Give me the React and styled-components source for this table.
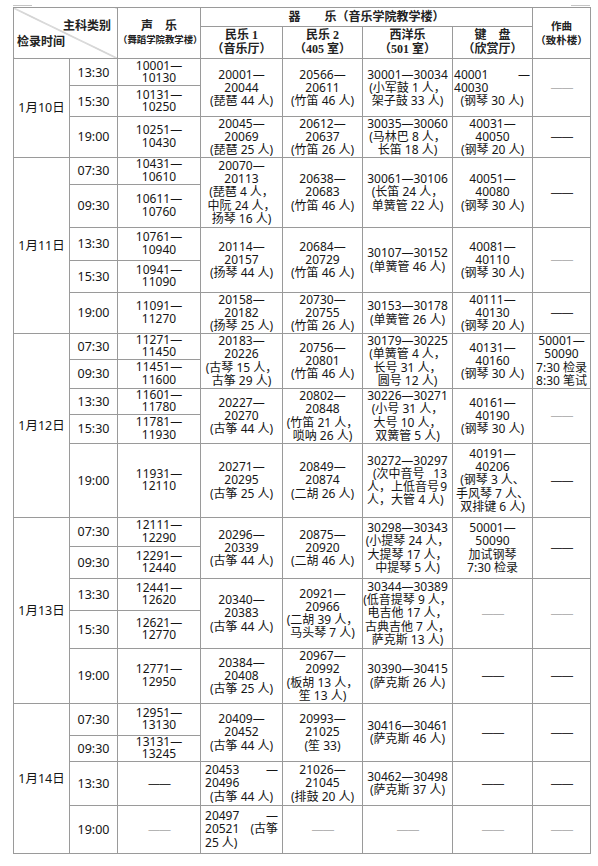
import React from 'react';
import styled, { createGlobalStyle } from 'styled-components';

const Global = createGlobalStyle`
  html, body { margin: 0; padding: 0; background: #fff; }
  body {
    font-family: "Noto Sans", "Noto Sans CJK SC", sans-serif;
    color: #151515;
  }
`;

const Page = styled.div`
  padding: 5px 0 0 13px;
`;

const Marks = styled.div`
  display: flex;
  justify-content: space-between;
  width: 577px;
  height: 1px;
  margin-bottom: 1px;
`;

const Mark = styled.span`
  display: block;
  width: 19px;
  height: 1px;
  background: #c4c4c4;
`;

const Table = styled.table`
  border-collapse: collapse;
  table-layout: fixed;
  width: 577px;
`;

const Row = styled.tr`
  height: ${(p) => p.$h}px;
`;

const border = '1px solid #9a9a9a';

const HeadCell = styled.th`
  border: ${border};
  padding: 0;
  font-family: "Liberation Serif", "Noto Sans CJK SC", serif;
  font-weight: 700;
  font-size: 12px;
  line-height: 13px;
  color: #222;
  text-align: center;
  vertical-align: middle;
  white-space: nowrap;
`;

const HeadLine = styled.span`
  display: block;
  height: 13px;
  font-size: ${(p) => p.$size || 12}px;
  & + & {
    margin-top: 1px;
  }
`;

const DiagCell = styled.th`
  border: ${border};
  padding: 0;
  font-family: "Liberation Serif", "Noto Sans CJK SC", serif;
  font-weight: 700;
  font-size: 12px;
  line-height: 16px;
  color: #222;
  background: linear-gradient(
    to top right,
    transparent calc(50% - 0.7px),
    #9a9a9a 50%,
    transparent calc(50% + 0.7px)
  );
`;

const DiagInner = styled.div`
  display: flex;
  flex-direction: column;
  padding: 1px 6px 0 3px;
`;

const DiagTop = styled.span`
  height: 16px;
  text-align: right;
`;

const DiagBottom = styled.span`
  height: 16px;
  text-align: left;
`;

const Cell = styled.td`
  border: ${border};
  padding: 0;
  font-size: 12px;
  line-height: 13px;
  text-align: center;
  vertical-align: middle;
  white-space: nowrap;
  overflow: visible;
`;

const DateCell = styled(Cell)`
  font-size: 12.5px;
`;

const TimeCell = styled(Cell)`
  font-size: 12.5px;
`;

const Line = styled.span`
  display: block;
  height: ${(p) => (p.$tight ? 12.4 : 13.2)}px;
  line-height: ${(p) => (p.$tight ? 12.4 : 13)}px;
`;

const Dash = styled.span`
  display: block;
  height: 13px;
  color: ${(p) => (p.$light ? '#b4b4b4' : '#333')};
  letter-spacing: -1px;
`;

const Justified = styled.div`
  padding: ${(p) => p.$pad};
  text-align: left;
`;

const Spread = styled.span`
  display: flex;
  height: 13.2px;
  justify-content: space-between;
  padding-left: ${(p) => p.$indent || 0};
`;

const LeftLine = styled.span`
  display: block;
  height: 13.2px;
  text-align: left;
`;

const CenterLine = styled.span`
  display: block;
  height: 13.2px;
  text-align: center;
`;

const L = (...lines) => ({ kind: 'lines', lines });
const D = (light) => ({ kind: 'dash', light });
const J = (parts, pad) => ({ kind: 'just', parts, pad });
const sp = (a, b, indent) => ({ type: 'spread', a, b, indent });
const lf = (text) => ({ type: 'left', text });
const ct = (text) => ({ type: 'center', text });

const dates = [
  {
    date: '1月10日',
    rows: [
      {
        t: '13:30', h: 27, v: L('10001—', '10130'), span: 2,
        g: [
          L('20001—', '20044', '(琵琶 44 人)'),
          L('20566—', '20611', '(竹笛 46 人)'),
          L('30001—30034', '(小军鼓 1 人，', '架子鼓 33 人)'),
          J([sp('40001', '—'), lf('40030'), ct('(钢琴 30 人)')], '0 2px 0 1px'),
          D(true),
        ],
      },
      { t: '15:30', h: 31, v: L('10131—', '10250') },
      {
        t: '19:00', h: 39, v: L('10251—', '10430'), span: 1,
        g: [
          L('20045—', '20069', '(琵琶 25 人)'),
          L('20612—', '20637', '(竹笛 26 人)'),
          L('30035—30060', '(马林巴 8 人，', '长笛 18 人)'),
          L('40031—', '40050', '(钢琴 20 人)'),
          D(false),
        ],
      },
    ],
  },
  {
    date: '1月11日',
    rows: [
      {
        t: '07:30', h: 27, v: L('10431—', '10610'), span: 2,
        g: [
          L('20070—', '20113', '(琵琶 4 人，', '中阮 24 人，', '扬琴 16 人)'),
          L('20638—', '20683', '(竹笛 46 人)'),
          L('30061—30106', '(长笛 24 人，', '单簧管 22 人)'),
          L('40051—', '40080', '(钢琴 30 人)'),
          D(false),
        ],
      },
      { t: '09:30', h: 43, v: L('10611—', '10760') },
      {
        t: '13:30', h: 33, v: L('10761—', '10940'), span: 2,
        g: [
          L('20114—', '20157', '(扬琴 44 人)'),
          L('20684—', '20729', '(竹笛 46 人)'),
          L('30107—30152', '(单簧管 46 人)'),
          L('40081—', '40110', '(钢琴 30 人)'),
          D(true),
        ],
      },
      { t: '15:30', h: 32, v: L('10941—', '11090') },
      {
        t: '19:00', h: 41, v: L('11091—', '11270'), span: 1,
        g: [
          L('20158—', '20182', '(扬琴 25 人)'),
          L('20730—', '20755', '(竹笛 26 人)'),
          L('30153—30178', '(单簧管 26 人)'),
          L('40111—', '40130', '(钢琴 20 人)'),
          D(false),
        ],
      },
    ],
  },
  {
    date: '1月12日',
    rows: [
      {
        t: '07:30', h: 26, v: L('11271—', '11450'), span: 2,
        g: [
          L('20183—', '20226', '(古琴 15 人，', '古筝 29 人)'),
          L('20756—', '20801', '(竹笛 46 人)'),
          L('30179—30225', '(单簧管 4 人，', '长号 31 人，', '圆号 12 人)'),
          L('40131—', '40160', '(钢琴 30 人)'),
          L('50001—', '50090', '7:30 检录', '8:30 笔试'),
        ],
      },
      { t: '09:30', h: 29, v: L('11451—', '11600') },
      {
        t: '13:30', h: 26, v: L('11601—', '11780'), span: 2,
        g: [
          L('20227—', '20270', '(古筝 44 人)'),
          L('20802—', '20848', '(竹笛 21 人，', '唢呐 26 人)'),
          L('30226—30271', '(小号 31 人，', '大号 10 人，', '双簧管 5 人)'),
          L('40161—', '40190', '(钢琴 30 人)'),
          D(true),
        ],
      },
      { t: '15:30', h: 29, v: L('11781—', '11930') },
      {
        t: '19:00', h: 74, v: L('11931—', '12110'), span: 1,
        g: [
          L('20271—', '20295', '(古筝 25 人)'),
          L('20849—', '20874', '(二胡 26 人)'),
          J(
            [
              lf('30272—30297'),
              sp('(次中音号', '13', '6px'),
              sp('人，上低音号', '9'),
              lf('人，大管 4 人)'),
            ],
            '0 5px 0 4px'
          ),
          L('40191—', '40206', '(钢琴 3 人、', '手风琴 7 人、', '双排键 6 人)'),
          D(false),
        ],
      },
    ],
  },
  {
    date: '1月13日',
    rows: [
      {
        t: '07:30', h: 29, v: L('12111—', '12290'), span: 2,
        g: [
          L('20296—', '20339', '(古筝 44 人)'),
          L('20875—', '20920', '(二胡 46 人)'),
          L('30298—30343', '(小提琴 24 人，', '大提琴 17 人，', '中提琴 5 人)'),
          L('50001—', '50090', '加试钢琴', '7:30 检录'),
          D(false),
        ],
      },
      { t: '09:30', h: 32, v: L('12291—', '12440') },
      {
        t: '13:30', h: 32, v: L('12441—', '12620'), span: 2,
        g: [
          L('20340—', '20383', '(古筝 44 人)'),
          L('20921—', '20966', '(二胡 39 人，', '马头琴 7 人)'),
          L('30344—30389', '(低音提琴 9 人，', '电吉他 17 人，', '古典吉他 7 人，', '萨克斯 13 人)'),
          D(true),
          D(true),
        ],
      },
      { t: '15:30', h: 38, v: L('12621—', '12770') },
      {
        t: '19:00', h: 55, v: L('12771—', '12950'), span: 1,
        g: [
          L('20384—', '20408', '(古筝 25 人)'),
          L('20967—', '20992', '(板胡 13 人，', '笙 13 人)'),
          L('30390—30415', '(萨克斯 26 人)'),
          D(false),
          D(false),
        ],
      },
    ],
  },
  {
    date: '1月14日',
    rows: [
      {
        t: '07:30', h: 32, v: L('12951—', '13130'), span: 2,
        g: [
          L('20409—', '20452', '(古筝 44 人)'),
          L('20993—', '21025', '(笙 33)'),
          L('30416—30461', '(萨克斯 46 人)'),
          D(false),
          D(false),
        ],
      },
      { t: '09:30', h: 26, v: L('13131—', '13245') },
      {
        t: '13:30', h: 44, v: D(false), span: 1,
        g: [
          J([sp('20453', '—'), lf('20496'), ct('(古筝 44 人)')], '0 4px'),
          L('21026—', '21045', '(排鼓 20 人)'),
          L('30462—30498', '(萨克斯 37 人)'),
          D(false),
          D(false),
        ],
      },
      {
        t: '19:00', h: 48, v: D(true), span: 1,
        g: [
          J([sp('20497', '—'), sp('20521', '(古筝'), lf('25 人)')], '0 4px'),
          D(true),
          D(true),
          D(true),
          D(true),
        ],
      },
    ],
  },
];

function Content({ c, tight }) {
  if (c.kind === 'dash') return <Dash $light={c.light}>——</Dash>;
  if (c.kind === 'just') {
    return (
      <Justified $pad={c.pad}>
        {c.parts.map((p, i) => {
          if (p.type === 'spread')
            return (
              <Spread key={i} $indent={p.indent}>
                <span>{p.a}</span>
                <span>{p.b}</span>
              </Spread>
            );
          if (p.type === 'left') return <LeftLine key={i}>{p.text}</LeftLine>;
          return <CenterLine key={i}>{p.text}</CenterLine>;
        })}
      </Justified>
    );
  }
  return c.lines.map((l, i) => (
    <Line key={i} $tight={tight}>
      {l}
    </Line>
  ));
}

const widths = [56, 48, 83, 82, 80, 90, 80, 58];

export default function App() {
  return (
    <Page>
      <Global />
      <Marks>
        <Mark />
        <Mark />
      </Marks>
      <Table>
        <colgroup>
          {widths.map((w, i) => (
            <col key={i} style={{ width: w }} />
          ))}
        </colgroup>
        <thead>
          <Row $h={19}>
            <DiagCell colSpan={2} rowSpan={2}>
              <DiagInner>
                <DiagTop>主科类别</DiagTop>
                <DiagBottom>检录时间</DiagBottom>
              </DiagInner>
            </DiagCell>
            <HeadCell rowSpan={2}>
              <HeadLine>声　乐</HeadLine>
              <HeadLine $size={9.4}>（舞蹈学院教学楼）</HeadLine>
            </HeadCell>
            <HeadCell colSpan={4}>
              <HeadLine>器　　乐（音乐学院教学楼）</HeadLine>
            </HeadCell>
            <HeadCell rowSpan={2}>
              <HeadLine $size={10.5}>作曲</HeadLine>
              <HeadLine $size={10.5}>（致朴楼）</HeadLine>
            </HeadCell>
          </Row>
          <Row $h={32}>
            <HeadCell>
              <HeadLine>民乐 1</HeadLine>
              <HeadLine>（音乐厅）</HeadLine>
            </HeadCell>
            <HeadCell>
              <HeadLine>民乐 2</HeadLine>
              <HeadLine>（405 室）</HeadLine>
            </HeadCell>
            <HeadCell>
              <HeadLine>西洋乐</HeadLine>
              <HeadLine>（501 室）</HeadLine>
            </HeadCell>
            <HeadCell>
              <HeadLine>键　盘</HeadLine>
              <HeadLine>（欣赏厅）</HeadLine>
            </HeadCell>
          </Row>
        </thead>
        <tbody>
          {dates.map((d) =>
            d.rows.map((r, i) => (
              <Row key={d.date + r.t} $h={r.h}>
                {i === 0 && <DateCell rowSpan={d.rows.length}>{d.date}</DateCell>}
                <TimeCell>{r.t}</TimeCell>
                <Cell>
                  <Content c={r.v} tight />
                </Cell>
                {r.g &&
                  r.g.map((c, j) => (
                    <Cell key={j} rowSpan={r.span}>
                      <Content c={c} />
                    </Cell>
                  ))}
              </Row>
            ))
          )}
        </tbody>
      </Table>
    </Page>
  );
}
